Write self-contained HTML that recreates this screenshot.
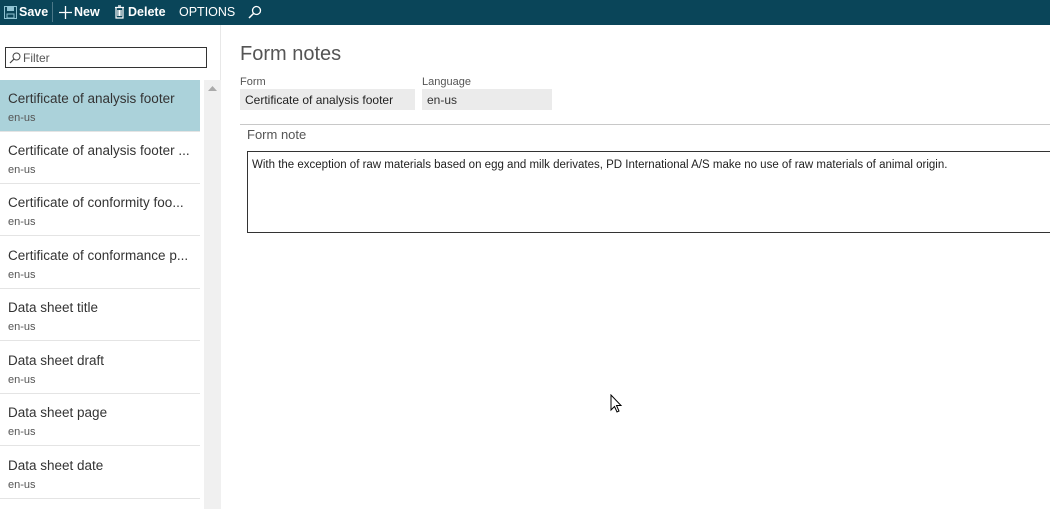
<!DOCTYPE html>
<html><head><meta charset="utf-8"><style>
*{box-sizing:border-box;margin:0;padding:0}
body{width:1050px;height:509px;overflow:hidden;background:#fff;font-family:"Segoe UI","Liberation Sans",sans-serif;position:relative;color:#222}
.top{position:absolute;left:0;top:0;width:1050px;height:25px;background:#0a4559;color:#fff;font-size:12.5px;font-weight:bold}
.top span{position:absolute;top:5px}
.sep{position:absolute;left:52px;top:2px;width:1px;height:20px;background:#4c7888}
.left{position:absolute;left:0;top:25px;width:221px;height:484px;border-right:1px solid #e8e8e8}
.filter{position:absolute;left:5px;top:22px;width:202px;height:21px;border:1px solid #333;font-size:12px;color:#555;padding:3px 0 0 17px}
.sb{position:absolute;left:204px;top:55px;width:17px;height:429px;background:#f0f0f0}
.row{position:absolute;left:0;width:200px;height:52px;border-bottom:1px solid #e4e4e4}
.row .t{position:absolute;left:8px;top:11px;font-size:13.5px;color:#333;white-space:nowrap}
.row .s{position:absolute;left:8px;top:32px;font-size:11px;color:#555}
.sel{background:#abd2da}
.lbl{position:absolute;font-size:11px;color:#555}
.fld{position:absolute;background:#ebebeb;font-size:12px;height:21px;padding:4px 0 0 5px}
</style></head><body>
<div class="top">
<svg style="position:absolute;left:4px;top:6px" width="13" height="13" viewBox="0 0 13 13"><rect x="0.5" y="0.5" width="12" height="12" fill="none" stroke="#8fc3d3"/><rect x="3" y="1" width="7" height="4" fill="#8fc3d3"/><rect x="3" y="8" width="7" height="4" fill="none" stroke="#8fc3d3"/></svg>
<span style="left:19px">Save</span>
<div class="sep"></div>
<svg style="position:absolute;left:59px;top:6px" width="13" height="13"><path d="M6.5 0V13M0 6.5H13" stroke="#fff" stroke-width="1.3"/></svg>
<span style="left:74px">New</span>
<svg style="position:absolute;left:114px;top:5px" width="11" height="14"><path d="M1 2.5H10M4 1H7M2 3V13H9V3M4 5V11M5.5 5V11M7 5V11" stroke="#fff" fill="none" stroke-width="1.2"/></svg>
<span style="left:128px">Delete</span>
<span style="left:179px;font-weight:normal">OPTIONS</span>
<svg style="position:absolute;left:248px;top:5px" width="14" height="14"><circle cx="8.5" cy="5.5" r="4" stroke="#fff" fill="none" stroke-width="1.3"/><path d="M5.5 8.5L1 13" stroke="#fff" stroke-width="1.5"/></svg>
</div>
<div class="left">
<div class="filter"><svg style="position:absolute;left:3px;top:4px" width="12" height="12"><circle cx="7.5" cy="4.5" r="3.5" stroke="#444" fill="none"/><path d="M5 7L1 11" stroke="#444" stroke-width="1.2"/></svg>Filter</div>
<div class="sb"><svg style="position:absolute;left:4px;top:6px" width="9" height="6"><path d="M0 5L4.5 0L9 5Z" fill="#aaa"/></svg></div>
<div class="row sel" style="top:55px"><div class="t">Certificate of analysis footer</div><div class="s">en-us</div></div>
<div class="row" style="top:107px"><div class="t">Certificate of analysis footer ...</div><div class="s">en-us</div></div>
<div class="row" style="top:159px"><div class="t">Certificate of conformity foo...</div><div class="s">en-us</div></div>
<div class="row" style="top:212px"><div class="t">Certificate of conformance p...</div><div class="s">en-us</div></div>
<div class="row" style="top:264px"><div class="t">Data sheet title</div><div class="s">en-us</div></div>
<div class="row" style="top:317px"><div class="t">Data sheet draft</div><div class="s">en-us</div></div>
<div class="row" style="top:369px"><div class="t">Data sheet page</div><div class="s">en-us</div></div>
<div class="row" style="top:422px"><div class="t">Data sheet date</div><div class="s">en-us</div></div>
</div>
<div style="position:absolute;left:240px;top:43px;font-size:20px;color:#555">Form notes</div>
<div class="lbl" style="left:240px;top:76px">Form</div>
<div class="fld" style="left:240px;top:89px;width:175px">Certificate of analysis footer</div>
<div class="lbl" style="left:422px;top:76px">Language</div>
<div class="fld" style="left:422px;top:89px;width:130px;color:#333">en-us</div>
<div style="position:absolute;left:240px;top:124px;width:810px;height:1px;background:#c8c8c8"></div>
<div style="position:absolute;left:247px;top:127px;font-size:13px;color:#555">Form note</div>
<div style="position:absolute;left:247px;top:151px;width:810px;height:82px;border:1px solid #333;font-size:11.5px;padding:7px 0 0 4px;color:#222">With the exception of raw materials based on egg and milk derivates, PD International A/S make no use of raw materials of animal origin.</div>
<svg style="position:absolute;left:610px;top:394px" width="13" height="20"><path d="M1 1V16L4.5 12.5L7 18L9 17L6.5 11.5H11Z" fill="#fff" stroke="#000"/></svg>
</body></html>
